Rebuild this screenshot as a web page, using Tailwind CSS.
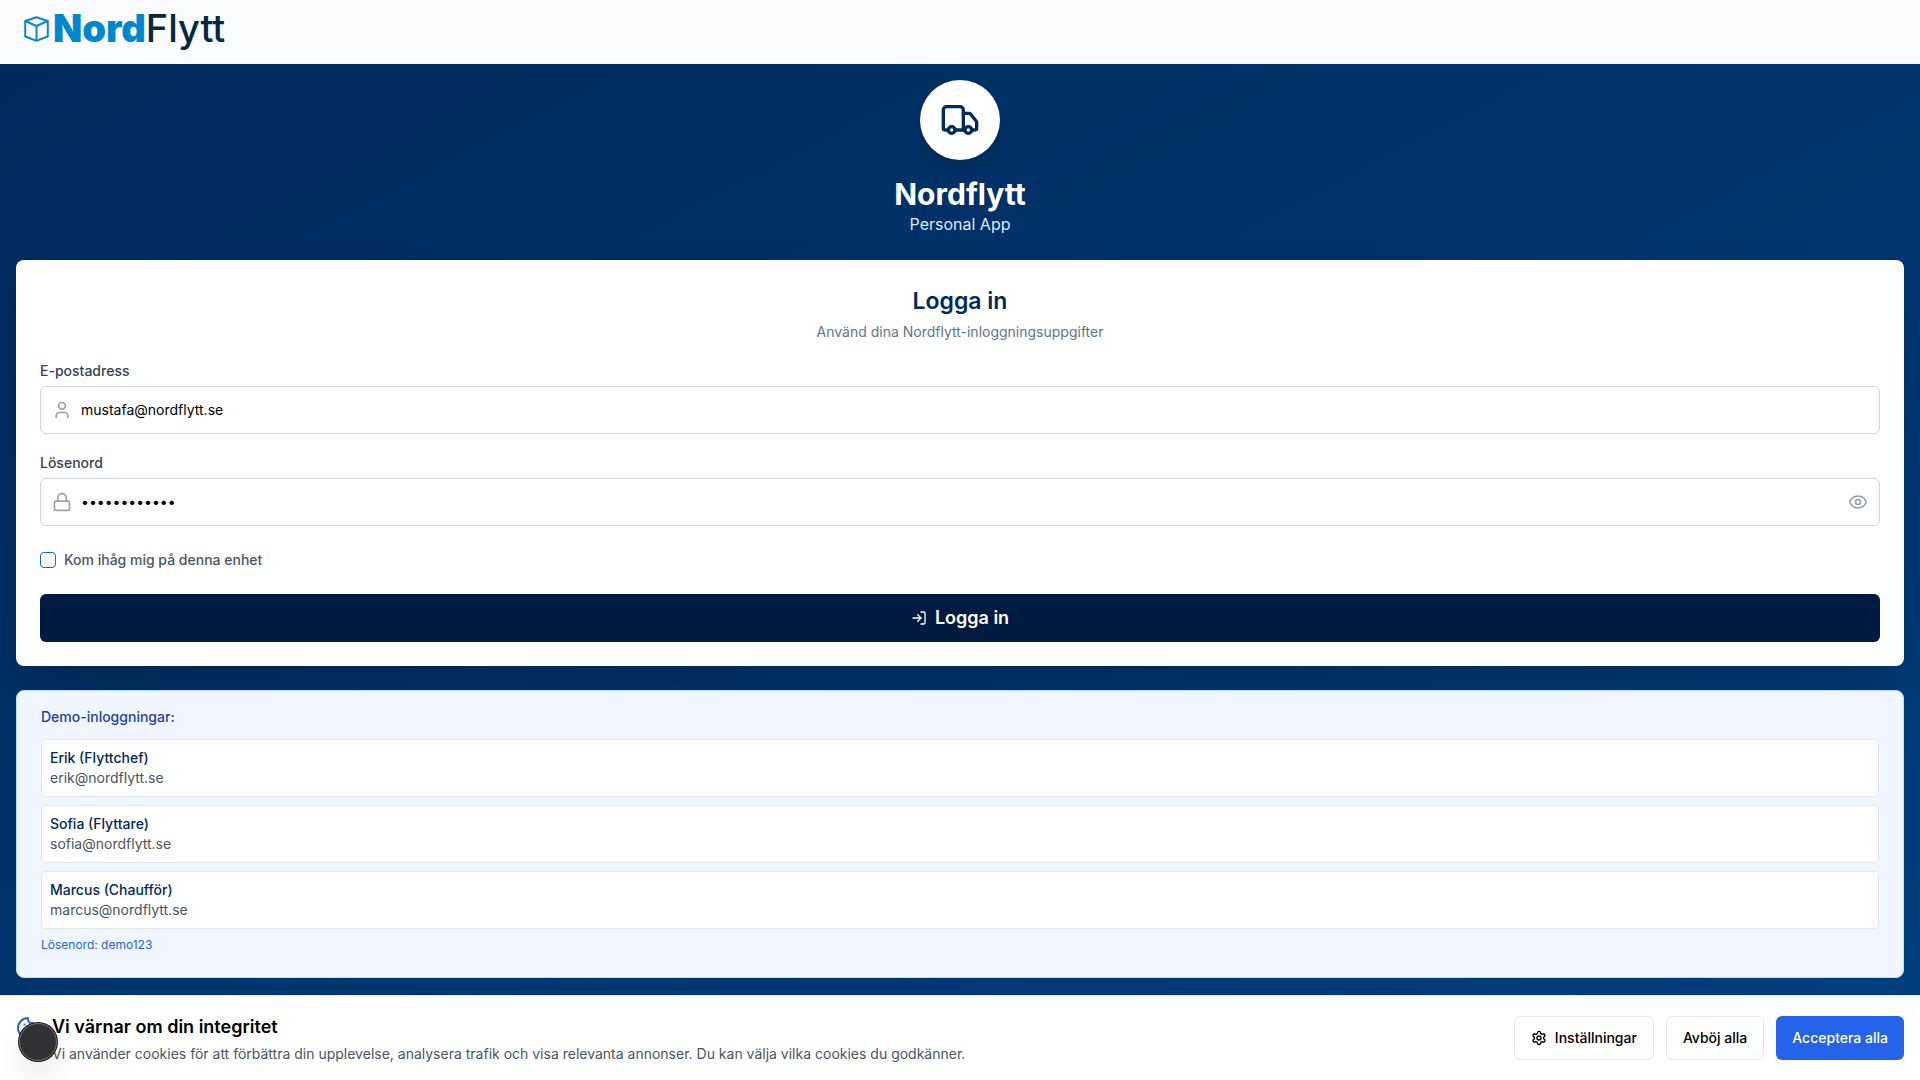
<!DOCTYPE html>
<html lang="sv">
<head>
<meta charset="utf-8">
<meta name="viewport" content="width=device-width, initial-scale=1">
<title>Nordflytt Personal App</title>
<script src="https://cdn.jsdelivr.net/npm/@tailwindcss/browser@4"></script>
</head>
<body class="flex min-h-screen flex-col font-['Inter',sans-serif] text-sm text-black">
<header class="flex h-16 shrink-0 items-center bg-[#fafbfc] px-6 pb-1.5">
  <a href="#" class="flex items-center gap-1">
    <svg class="h-[26px] w-[25px]" viewBox="0 0 25 26" fill="none" stroke="#1186c8" stroke-width="2" stroke-linejoin="round"><path d="M12.500 1.200 23.800 5v15.500L12.500 24.800 1.200 20.500V5z"/><path d="M1.200 5l11.300 5L23.800 5M12.500 10v15"/></svg>
    <span class="pb-0.5 text-[38px] leading-9 text-[#06293f]"><span class="font-black text-[#0088cf]">Nord</span><span class="font-medium">Flytt</span></span>
  </a>
</header>

<main class="flex-1 bg-linear-to-br from-[#002a5c] to-[#003f7f] px-4 pt-4 pb-[102px]">
  <div class="mb-6 flex flex-col items-center">
    <div class="mb-4 flex size-20 items-center justify-center rounded-full bg-white shadow-lg">
      <svg class="size-10 text-[#002a5c]" viewBox="0 0 24 24" fill="none" stroke="currentColor" stroke-width="2" stroke-linecap="round" stroke-linejoin="round"><path d="M14 18V6a2 2 0 0 0-2-2H4a2 2 0 0 0-2 2v11a1 1 0 0 0 1 1h2"/><path d="M15 18H9"/><path d="M19 18h2a1 1 0 0 0 1-1v-3.650a1 1 0 0 0-.22-.624l-3.480-4.350A1 1 0 0 0 17.520 8H14"/><circle cx="17" cy="18" r="2"/><circle cx="7" cy="18" r="2"/></svg>
    </div>
    <h1 class="text-3xl font-bold text-white">Nordflytt</h1>
    <p class="text-base text-blue-100">Personal App</p>
  </div>

  <section class="mb-6 rounded-lg bg-white p-6 shadow-2xl">
    <h2 class="text-center text-[23px] leading-[34px] font-semibold text-[#002a5c]">Logga in</h2>
    <p class="mt-1 text-center text-slate-500">Använd dina Nordflytt-inloggningsuppgifter</p>
    <form class="mt-[22px]">
      <label for="email" class="mb-2 block leading-3.5 font-medium text-gray-700">E-postadress</label>
      <div class="relative mb-[22px]">
        <svg class="absolute top-3.5 left-3 size-5 text-gray-400" viewBox="0 0 24 24" fill="none" stroke="currentColor" stroke-width="2" stroke-linecap="round" stroke-linejoin="round"><path d="M19 21v-2a4 4 0 0 0-4-4H9a4 4 0 0 0-4 4v2"/><circle cx="12" cy="7" r="4"/></svg>
        <input id="email" type="email" value="mustafa@nordflytt.se" class="block h-12 w-full rounded-md border border-gray-300 bg-white pr-3 pb-0.5 pl-10">
      </div>
      <label for="password" class="mb-2 block leading-3.5 font-medium text-gray-700">Lösenord</label>
      <div class="relative mb-[26px]">
        <svg class="absolute top-3.5 left-3 size-5 text-gray-400" viewBox="0 0 24 24" fill="none" stroke="currentColor" stroke-width="2" stroke-linecap="round" stroke-linejoin="round"><rect width="18" height="11" x="3" y="11" rx="2"/><path d="M7 11V7a5 5 0 0 1 10 0v4"/></svg>
        <input id="password" type="password" value="nordflytt123" class="block h-12 w-full rounded-md border border-gray-300 bg-white px-10 pb-0.5">
        <button type="button" aria-label="Visa lösenord" class="absolute top-3.5 right-3 text-gray-400">
          <svg class="size-5" viewBox="0 0 24 24" fill="none" stroke="currentColor" stroke-width="2" stroke-linecap="round" stroke-linejoin="round"><path d="M2.062 12.348a1 1 0 0 1 0-.696 10.750 10.750 0 0 1 19.876 0 1 1 0 0 1 0 .696 10.750 10.750 0 0 1-19.876 0"/><circle cx="12" cy="12" r="3"/></svg>
        </button>
      </div>
      <div class="mb-[26px] flex h-4 items-center gap-2">
        <input id="remember" type="checkbox" class="size-4 appearance-none rounded-sm border border-blue-600">
        <label for="remember" class="font-medium text-gray-600">Kom ihåg mig på denna enhet</label>
      </div>
      <button type="submit" class="flex h-12 w-full items-center justify-center gap-2 rounded-md bg-[#001a40] text-lg font-semibold text-white">
        <svg class="size-4" viewBox="0 0 24 24" fill="none" stroke="currentColor" stroke-width="2" stroke-linecap="round" stroke-linejoin="round"><path d="M15 3h4a2 2 0 0 1 2 2v14a2 2 0 0 1-2 2h-4"/><path d="m10 17 5-5-5-5"/><path d="M15 12H3"/></svg>
        Logga in
      </button>
    </form>
  </section>

  <section class="rounded-lg border border-blue-200 bg-[#eff6ff] px-6 pt-4 pb-6">
    <h3 class="mb-3 font-medium text-[#1e40af]">Demo-inloggningar:</h3>
    <div class="flex flex-col gap-2">
      <button type="button" class="block rounded-sm border border-slate-200 bg-white p-2 text-left"><span class="block font-medium text-[#002a5c]">Erik (Flyttchef)</span><span class="block text-gray-600">erik@nordflytt.se</span></button>
      <button type="button" class="block rounded-sm border border-slate-200 bg-white p-2 text-left"><span class="block font-medium text-[#002a5c]">Sofia (Flyttare)</span><span class="block text-gray-600">sofia@nordflytt.se</span></button>
      <button type="button" class="block rounded-sm border border-slate-200 bg-white p-2 text-left"><span class="block font-medium text-[#002a5c]">Marcus (Chaufför)</span><span class="block text-gray-600">marcus@nordflytt.se</span></button>
    </div>
    <p class="mt-2 text-xs text-[#2563eb]">Lösenord: demo123</p>
  </section>
</main>

<aside class="fixed inset-x-0 bottom-0 flex items-center justify-between gap-4 border-t border-slate-200 bg-white p-4">
  <div class="flex items-start gap-3">
    <svg class="mt-1 size-6 shrink-0 text-[#2563eb]" viewBox="0 0 24 24" fill="none" stroke="currentColor" stroke-width="2" stroke-linecap="round" stroke-linejoin="round"><path d="M12 2a10 10 0 1 0 10 10 4 4 0 0 1-5-5 4 4 0 0 1-5-5"/><path d="M8.500 8.500v.01M16 15.500v.01M12 12v.01M11 17v.01M7 14v.01"/></svg>
    <div>
      <h3 class="text-lg leading-[30px] font-semibold">Vi värnar om din integritet</h3>
      <p class="mt-0.5 text-gray-600">Vi använder cookies för att förbättra din upplevelse, analysera trafik och visa relevanta annonser. Du kan välja vilka cookies du godkänner.</p>
    </div>
  </div>
  <div class="flex shrink-0 gap-3 font-medium">
    <button type="button" class="flex h-11 items-center gap-2 rounded-md border border-slate-200 bg-white px-4">
      <svg class="size-4" viewBox="0 0 24 24" fill="none" stroke="currentColor" stroke-width="2" stroke-linecap="round" stroke-linejoin="round"><path d="M12.220 2h-.44a2 2 0 0 0-2 2v.18a2 2 0 0 1-1 1.730l-.43.25a2 2 0 0 1-2 0l-.15-.08a2 2 0 0 0-2.730.73l-.22.38a2 2 0 0 0 .73 2.730l.15.1a2 2 0 0 1 1 1.720v.51a2 2 0 0 1-1 1.740l-.15.09a2 2 0 0 0-.73 2.730l.22.38a2 2 0 0 0 2.730.73l.15-.08a2 2 0 0 1 2 0l.43.25a2 2 0 0 1 1 1.730V20a2 2 0 0 0 2 2h.44a2 2 0 0 0 2-2v-.18a2 2 0 0 1 1-1.730l.43-.25a2 2 0 0 1 2 0l.15.08a2 2 0 0 0 2.730-.73l.22-.39a2 2 0 0 0-.73-2.730l-.15-.08a2 2 0 0 1-1-1.740v-.5a2 2 0 0 1 1-1.740l.15-.09a2 2 0 0 0 .73-2.730l-.22-.38a2 2 0 0 0-2.730-.73l-.15.08a2 2 0 0 1-2 0l-.43-.25a2 2 0 0 1-1-1.730V4a2 2 0 0 0-2-2z"/><circle cx="12" cy="12" r="3"/></svg>
      Inställningar
    </button>
    <button type="button" class="h-11 rounded-md border border-slate-200 bg-white px-4">Avböj alla</button>
    <button type="button" class="h-11 rounded-md bg-[#2563eb] px-4 text-white">Acceptera alla</button>
  </div>
</aside>
<button type="button" aria-label="Verktyg" class="fixed bottom-[19px] left-[19px] size-[38px] rounded-full border border-neutral-500 bg-[#303132] shadow-[0_0_0_1px_#171717,0_16px_32px_-8px_rgba(0,0,0,0.24)]"></button>
</body>
</html>
